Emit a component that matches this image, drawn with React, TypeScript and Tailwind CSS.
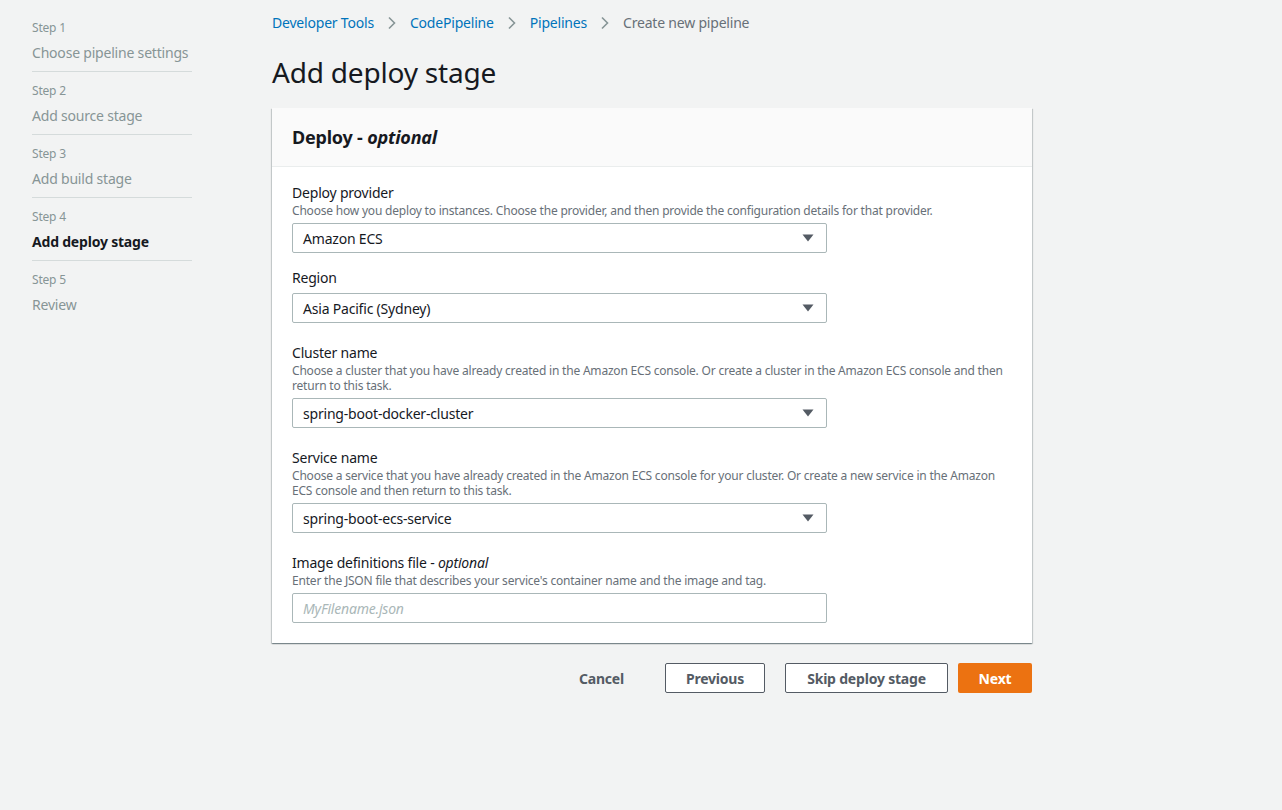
import React from 'react';

const steps = [
  { label: 'Step 1', title: 'Choose pipeline settings' },
  { label: 'Step 2', title: 'Add source stage' },
  { label: 'Step 3', title: 'Add build stage' },
  { label: 'Step 4', title: 'Add deploy stage', active: true },
  { label: 'Step 5', title: 'Review', last: true },
];

function Caret() {
  return (
    <svg width="12" height="8" viewBox="0 0 12 8" className="shrink-0">
      <path d="M0.5 0.5 L11.5 0.5 L6 7.5 Z" fill="#545b64" />
    </svg>
  );
}

function Chevron() {
  return (
    <svg width="10" height="14" viewBox="0 0 10 14" className="mx-[13px]">
      <path d="M2 1.5 L7.5 7 L2 12.5" fill="none" stroke="#879596" strokeWidth="1.6" />
    </svg>
  );
}

function Select({ value }: { value: string }) {
  return (
    <div className="mt-[5px] flex h-[30px] w-[535px] items-center justify-between rounded-[2px] border border-[#aab7b8] bg-white pl-[10px] pr-[12px] text-[14px] text-[#16191f]">
      <span>{value}</span>
      <Caret />
    </div>
  );
}

function Field({
  label,
  optional,
  desc,
  children,
  className = '',
}: {
  label: string;
  optional?: boolean;
  desc?: React.ReactNode;
  children: React.ReactNode;
  className?: string;
}) {
  return (
    <div className={className}>
      <div className="text-[14px] leading-[20px] text-[#16191f]">
        {label}
        {optional && (
          <>
            {' - '}
            <i>optional</i>
          </>
        )}
      </div>
      {desc && <div className="w-[715px] text-[12px] leading-[15px] text-[#687078]">{desc}</div>}
      {children}
    </div>
  );
}

export default function App() {
  return (
    <div
      className="flex min-h-[810px] w-full bg-[#f2f3f3] tracking-[-0.2px]"
      style={{ fontFamily: '"Noto Sans", "Open Sans", Arial, sans-serif' }}
    >
      <nav className="w-[240px] shrink-0 pl-[32px] pt-[9px]">
        {steps.map((s) => (
          <div
            key={s.label}
            className={`w-[160px] pt-[11px] pb-[7px] ${s.last ? '' : 'border-b border-[#d5dbdb]'}`}
          >
            <div className="text-[12px] leading-[16px] text-[#879596]">{s.label}</div>
            <div
              className={`mt-[7px] pb-[1px] whitespace-nowrap text-[14px] leading-[20px] ${
                s.active ? 'font-bold text-[#16191f]' : 'text-[#879596]'
              }`}
            >
              {s.title}
            </div>
          </div>
        ))}
      </nav>

      <main className="w-[760px] pl-[32px] pt-[13px]">
        <div className="flex items-center text-[14px] leading-[20px]">
          <span className="text-[#0073bb]">Developer Tools</span>
          <Chevron />
          <span className="text-[#0073bb]">CodePipeline</span>
          <Chevron />
          <span className="text-[#0073bb]">Pipelines</span>
          <Chevron />
          <span className="text-[#687078]">Create new pipeline</span>
        </div>

        <h1 className="mt-[21px] text-[28px] leading-[36px] font-normal text-[#16191f]">Add deploy stage</h1>

        <section className="mt-[18px] w-[760px] bg-white shadow-[0_1px_1px_0_rgba(0,28,36,0.3),1px_1px_1px_0_rgba(0,28,36,0.15),-1px_1px_1px_0_rgba(0,28,36,0.15)]">
          <div className="flex h-[59px] items-center border-b border-[#eaeded] bg-[#fafafa] px-[20px] pt-[1px]">
            <h2 className="text-[18px] font-bold text-[#16191f]">
              Deploy - <i>optional</i>
            </h2>
          </div>
          <div className="px-[20px] pt-[16px] pb-[20px]">
            <Field
              label="Deploy provider"
              desc="Choose how you deploy to instances. Choose the provider, and then provide the configuration details for that provider."
            >
              <Select value="Amazon ECS" />
            </Field>
            <Field label="Region" className="mt-[15px]">
              <Select value="Asia Pacific (Sydney)" />
            </Field>
            <Field
              label="Cluster name"
              className="mt-[20px]"
              desc="Choose a cluster that you have already created in the Amazon ECS console. Or create a cluster in the Amazon ECS console and then return to this task."
            >
              <Select value="spring-boot-docker-cluster" />
            </Field>
            <Field
              label="Service name"
              className="mt-[20px]"
              desc="Choose a service that you have already created in the Amazon ECS console for your cluster. Or create a new service in the Amazon ECS console and then return to this task."
            >
              <Select value="spring-boot-ecs-service" />
            </Field>
            <Field
              label="Image definitions file"
              optional
              className="mt-[20px]"
              desc="Enter the JSON file that describes your service's container name and the image and tag."
            >
              <div className="mt-[5px] flex h-[30px] w-[535px] items-center rounded-[2px] border border-[#aab7b8] bg-white px-[10px] text-[14px] italic text-[#aab7b8]">
                MyFilename.json
              </div>
            </Field>
          </div>
        </section>

        <div className="mt-[20px] flex w-[760px] items-center justify-end text-[14px] font-bold text-[#545b64]">
          <button className="mr-[41px] h-[30px] px-[0px]">Cancel</button>
          <button className="mr-[20px] h-[30px] w-[100px] rounded-[2px] border border-[#545b64] bg-white">
            Previous
          </button>
          <button className="mr-[10px] h-[30px] w-[163px] rounded-[2px] border border-[#545b64] bg-white">
            Skip deploy stage
          </button>
          <button className="h-[30px] w-[74px] rounded-[2px] bg-[#ec7211] text-white">Next</button>
        </div>
      </main>
    </div>
  );
}
